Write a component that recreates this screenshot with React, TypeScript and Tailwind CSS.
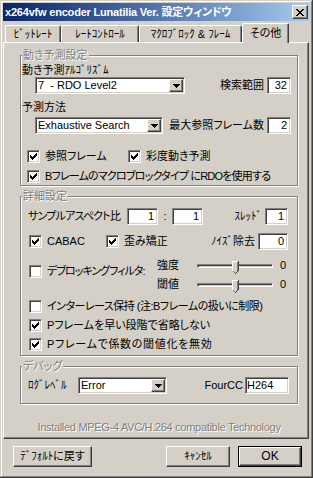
import type { ReactNode } from 'react';

const sunken =
    'border border-t-[#808080] border-l-[#808080] border-r-white border-b-white shadow-[inset_1px_1px_#404040,inset_-1px_-1px_#d4d0c8]';
const raised =
    'border border-t-white border-l-white border-r-[#404040] border-b-[#404040] shadow-[inset_-1px_-1px_#808080]';
const etched = 'border border-[#808080] shadow-[inset_1px_1px_#fff,1px_1px_#fff]';
const disabled = 'text-[#808080] [text-shadow:1px_1px_0_#fff]';

function CheckMark() {
    return (
        <svg width="7" height="7" viewBox="0 0 7 7" shapeRendering="crispEdges">
            <path
                d="M6 0h1v1H6zM5 1h2v1H5zM0 2h1v1H0zM4 2h3v1H4zM0 3h2v1H0zM3 3h3v1H3zM0 4h5v1H0zM1 5h3v1H1zM2 6h1v1H2z"
                fill="#000"
            />
        </svg>
    );
}

function DownArrow() {
    return (
        <svg width="7" height="4" viewBox="0 0 7 4" shapeRendering="crispEdges">
            <path d="M0 0h7v1H0zM1 1h5v1H1zM2 2h3v1H2zM3 3h1v1H3z" fill="#000" />
        </svg>
    );
}

function CloseGlyph() {
    return (
        <svg width="8" height="7" viewBox="0 0 8 7" shapeRendering="crispEdges">
            <path
                d="M0 0h2v1H0zM6 0h2v1H6zM1 1h2v1H1zM5 1h2v1H5zM2 2h4v1H2zM3 3h2v1H3zM2 4h4v1H2zM1 5h2v1H1zM5 5h2v1H5zM0 6h2v1H0zM6 6h2v1H6z"
                fill="#000"
            />
        </svg>
    );
}

function Check({
    checked,
    className = '',
    textClass = '',
    children,
}: {
    checked?: boolean;
    className?: string;
    textClass?: string;
    children: ReactNode;
}) {
    return (
        <div className={`flex h-[13px] shrink-0 items-center ${className}`}>
            <span
                className={`flex h-[13px] w-[13px] shrink-0 items-center justify-center bg-white ${sunken}`}
            >
                {checked && <CheckMark />}
            </span>
            <span className={`ml-[5px] leading-[13px] whitespace-nowrap ${textClass}`}>
                {children}
            </span>
        </div>
    );
}

function Edit({
    value,
    className,
    left,
}: {
    value: string;
    className: string;
    left?: boolean;
}) {
    return (
        <div
            className={`flex h-[17px] shrink-0 items-center bg-white leading-[13px] ${sunken} ${className} ${left ? 'justify-start pl-[1px]' : 'justify-end pr-[3px]'}`}
        >
            {value}
        </div>
    );
}

function Combo({ value, className }: { value: string; className: string }) {
    return (
        <div className={`flex h-[17px] shrink-0 bg-white p-px ${sunken} ${className}`}>
            <span className="flex-1 pl-px leading-[13px] whitespace-pre">{value}</span>
            <span
                className={`flex w-[14px] items-center justify-center bg-[#d4d0c8] ${raised}`}
            >
                <DownArrow />
            </span>
        </div>
    );
}

function Button({
    className,
    isDefault,
    children,
}: {
    className: string;
    isDefault?: boolean;
    children: ReactNode;
}) {
    return (
        <div
            className={`flex h-[21px] shrink-0 bg-[#d4d0c8] ${isDefault ? 'border border-black' : ''} ${className}`}
        >
            <span className={`flex h-full w-full items-center justify-center ${raised}`}>
                {children}
            </span>
        </div>
    );
}

function Tab({
    className,
    active,
    children,
}: {
    className: string;
    active?: boolean;
    children: ReactNode;
}) {
    const edge =
        'rounded-t-[2px] border-t border-r border-l border-t-white border-r-[#404040] border-l-white bg-[#d4d0c8] shadow-[inset_-1px_0_#808080]';
    if (active) {
        return (
            <div
                className={`relative z-10 -mb-px flex h-[20px] shrink-0 justify-center pt-[3px] leading-[13px] ${edge} ${className}`}
            >
                {children}
            </div>
        );
    }
    return (
        <div
            className={`flex h-[17px] shrink-0 items-center justify-center leading-[13px] whitespace-nowrap ${edge} ${className}`}
        >
            {children}
        </div>
    );
}

function Group({
    title,
    className,
    children,
}: {
    title: string;
    className: string;
    children: ReactNode;
}) {
    return (
        <div className={`ml-[16px] flex w-[278px] shrink-0 flex-col ${etched} ${className}`}>
            <span
                className={`-mt-[7px] ml-[1px] h-[12px] self-start bg-[#d4d0c8] px-px leading-[12px] ${disabled}`}
            >
                {title}
            </span>
            {children}
        </div>
    );
}

function SliderRow({ label }: { label: string }) {
    return (
        <div className="flex h-[19px] items-center">
            <span className="w-[40px] leading-[13px]">{label}</span>
            <div className="flex h-[4px] w-[76px] items-center border border-t-[#808080] border-r-white border-b-white border-l-[#808080] shadow-[inset_1px_1px_#404040]">
                <svg
                    className="mt-[4px] ml-[34px] shrink-0"
                    width="7"
                    height="14"
                    viewBox="0 0 7 14"
                    shapeRendering="crispEdges"
                >
                    <path d="M0 0h7v10l-3.5 4L0 10z" fill="#d4d0c8" />
                    <path d="M0 0h6v1H1v9H0z" fill="#fff" />
                    <path d="M6 0h1v10H6zM5 10h1v1H5zM4 11h1v1H4zM3 12h1v1H3z" fill="#404040" />
                    <path d="M5 1h1v9H5zM1 10h1v1H1zM2 11h1v1H2z" fill="#808080" />
                </svg>
            </div>
            <span className="ml-[7px] leading-[13px]">0</span>
        </div>
    );
}

export default function App() {
    return (
        <div className="flex h-[478px] w-[313px] flex-col bg-[#d4d0c8] pt-[3px] pr-[4px] pl-[3px] font-['Liberation_Sans','Noto_Sans_CJK_JP',sans-serif] text-[11px] leading-[13px] text-black shadow-[inset_-1px_-1px_#404040,inset_1px_1px_#d4d0c8,inset_-2px_-2px_#808080,inset_2px_2px_#fff] [font-feature-settings:'palt']">
            <div className="flex h-[18px] shrink-0 items-center bg-linear-to-r from-[#0a246a] to-[#a6caf0] pr-[1px] pl-[2px]">
                <span className="font-bold tracking-[-0.2px] whitespace-nowrap text-white">
                    x264vfw encoder Lunatilia Ver. 設定ウィンドウ
                </span>
                <span
                    className={`ml-auto flex h-[14px] w-[16px] items-center justify-center bg-[#d4d0c8] ${raised}`}
                >
                    <CloseGlyph />
                </span>
            </div>

            <div className="flex h-[21px] shrink-0 items-end pl-[2px]">
                <Tab className="w-[56px]">ﾋﾞｯﾄﾚｰﾄ</Tab>
                <Tab className="w-[78px]">ﾚｰﾄｺﾝﾄﾛｰﾙ</Tab>
                <Tab className="w-[103px]">ﾏｸﾛﾌﾞﾛｯｸ &amp; ﾌﾚｰﾑ</Tab>
                <Tab active className="w-[47px]">
                    その他
                </Tab>
            </div>

            <div className={`flex h-[397px] shrink-0 flex-col ${raised}`}>
                <Group title="動き予測設定" className="mt-[12px] h-[131px]">
                    <div className="mt-[3px] ml-[1px] h-[13px]">動き予測ｱﾙｺﾞﾘｽﾞﾑ</div>
                    <div className="flex h-[17px] items-center pr-[6px] pl-[14px]">
                        <Combo value="7  - RDO Level2" className="w-[150px]" />
                        <span className="mr-[3px] ml-auto">検索範囲</span>
                        <Edit value="32" className="w-[24px]" />
                    </div>
                    <div className="mt-[7px] ml-[1px] h-[13px]">予測方法</div>
                    <div className="mt-[3px] flex h-[17px] items-center pr-[6px] pl-[14px]">
                        <Combo value="Exhaustive Search" className="w-[128px]" />
                        <span className="mr-[3px] ml-auto whitespace-nowrap">
                            最大参照フレーム数
                        </span>
                        <Edit value="2" className="w-[24px]" />
                    </div>
                    <div className="mt-[16px] flex pl-[6px]">
                        <Check checked className="w-[101px]">
                            参照フレーム
                        </Check>
                        <Check checked>彩度動き予測</Check>
                    </div>
                    <Check checked className="mt-[7px] ml-[6px]" textClass="tracking-[-0.8px]">
                        Bフレームのマクロブロックタイプ にRDOを使用する
                    </Check>
                </Group>

                <Group title="詳細設定" className="mt-[10px] h-[160px]">
                    <div className="mt-[6px] flex h-[17px] items-center pr-[9px] pl-[7px]">
                        <span className="w-[99px] tracking-[-0.8px] whitespace-nowrap">
                            サンプルアスペクト比
                        </span>
                        <Edit value="1" className="w-[31px]" />
                        <span className="w-[14px] text-center">:</span>
                        <Edit value="1" className="w-[31px]" />
                        <span className="mr-[3px] ml-auto">ｽﾚｯﾄﾞ</span>
                        <Edit value="1" className="w-[23px]" />
                    </div>
                    <div className="mt-[8px] flex h-[17px] items-center pr-[9px] pl-[8px]">
                        <Check checked className="w-[77px]">
                            CABAC
                        </Check>
                        <Check checked>歪み矯正</Check>
                        <span className="mr-[3px] ml-auto">ﾉｲｽﾞ除去</span>
                        <Edit value="0" className="w-[30px]" />
                    </div>
                    <div className="mt-[6px] flex h-[38px] pl-[8px]">
                        <Check className="mt-[9px] w-[128px]" textClass="tracking-[-1px]">
                            デブロッキングフィルタ:
                        </Check>
                        <div className="flex flex-col">
                            <SliderRow label="強度" />
                            <SliderRow label="閾値" />
                        </div>
                    </div>
                    <Check className="mt-[6px] ml-[8px]" textClass="tracking-[-0.5px]">
                        インターレース保持 (注:Bフレームの扱いに制限)
                    </Check>
                    <Check checked className="mt-[6px] ml-[8px]">
                        Pフレームを早い段階で省略しない
                    </Check>
                    <Check checked className="mt-[6px] ml-[8px]" textClass="tracking-[0.7px]">
                        Pフレームで係数の閾値化を無効
                    </Check>
                </Group>

                <Group title="デバッグ" className="mt-[10px] h-[38px]">
                    <div className="mt-[5px] flex h-[17px] items-center pr-[8px] pl-[7px]">
                        <span className="w-[50px]">ﾛｸﾞﾚﾍﾞﾙ</span>
                        <Combo value="Error" className="w-[89px]" />
                        <span className="mr-[2px] ml-auto">FourCC</span>
                        <Edit value="H264" left className="w-[44px]" />
                    </div>
                </Group>

                <div
                    className={`mt-[16px] ml-[16px] h-[14px] w-[278px] text-center leading-[14px] tracking-[-0.3px] whitespace-nowrap ${disabled}`}
                >
                    Installed MPEG-4 AVC/H.264 compatible Technology
                </div>
            </div>

            <div className="mt-[7px] flex h-[21px] shrink-0 pr-[7px] pl-[10px]">
                <Button className="w-[79px]">ﾃﾞﾌｫﾙﾄに戻す</Button>
                <Button className="ml-auto w-[64px]">ｷｬﾝｾﾙ</Button>
                <Button isDefault className="ml-[8px] w-[64px]">
                    <span className="text-[12px]">OK</span>
                </Button>
            </div>
        </div>
    );
}
